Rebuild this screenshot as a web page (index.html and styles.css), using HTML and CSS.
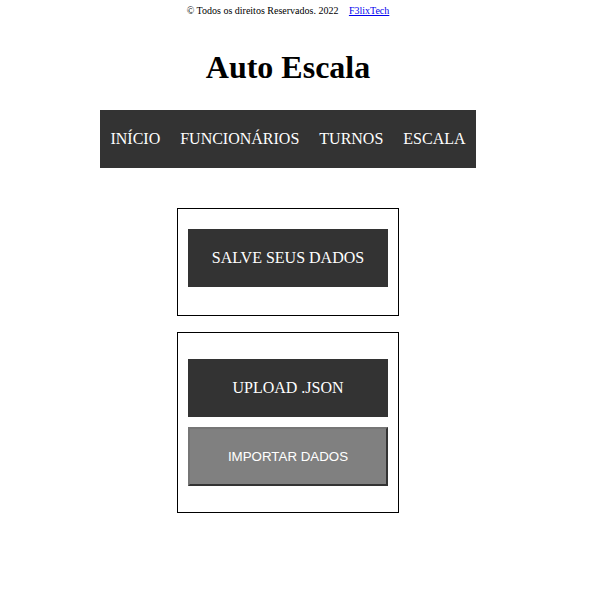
FILE: index.html
```html
<!DOCTYPE html>
<html lang="pt-BR">
<head>
<meta charset="utf-8">
<title>Auto Escala</title>
<link rel="stylesheet" href="styles.css">
</head>
<body>
<footer class="credits">© Todos os direitos Reservados. 2022 <a class="credits-link" href="#">F3lixTech</a></footer>
<h1 class="title">Auto Escala</h1>
<nav class="menu">
  <a class="menu-item" href="#">INÍCIO</a>
  <a class="menu-item" href="#">FUNCIONÁRIOS</a>
  <a class="menu-item" href="#">TURNOS</a>
  <a class="menu-item" href="#">ESCALA</a>
</nav>
<main class="panels">
  <section class="panel panel-save">
    <div class="dark-btn">SALVE SEUS DADOS</div>
  </section>
  <section class="panel panel-upload">
    <div class="dark-btn">UPLOAD .JSON</div>
    <button class="import-btn" type="button">IMPORTAR DADOS</button>
  </section>
</main>
</body>
</html>
```
FILE: styles.css
```css
html, body {
  margin: 0;
  padding: 0;
  background: #fff;
}
body {
  font-family: "Liberation Serif", "Times New Roman", serif;
  color: #000;
  width: 576px;
}
.credits {
  display: block;
  text-align: center;
  font-size: 10px;
  line-height: 12px;
  padding-top: 5px;
}
.credits-link {
  color: #0000ee;
  margin-left: 8px;
}
.title {
  text-align: center;
  font-size: 32px;
  font-weight: bold;
  margin: 32px 0 0;
  line-height: 37px;
}
.menu {
  display: flex;
  width: 376px;
  height: 58px;
  margin: 24px 0 0 100px;
  background: #333;
  align-items: center;
  justify-content: center;
}
.menu-item {
  color: #fff;
  text-decoration: none;
  font-size: 16px;
  padding: 0 10px;
}
.panels {
  display: flex;
  flex-direction: column;
  align-items: flex-start;
  gap: 16px;
  margin: 40px 0 0 177px;
}
.panel {
  border: 1px solid #000;
  display: flex;
  flex-direction: column;
  padding: 0 10px;
  width: 200px;
}
.panel-save {
  padding-top: 20px;
  padding-bottom: 28px;
}
.panel-upload {
  padding-top: 26px;
  padding-bottom: 26px;
  gap: 10px;
}
.dark-btn {
  width: 200px;
  height: 58px;
  background: #333;
  color: #fff;
  font-size: 16px;
  display: flex;
  align-items: center;
  justify-content: center;
}
.import-btn {
  width: 200px;
  height: 59px;
  background: #808080;
  color: #fff;
  font-family: "Liberation Sans", Arial, sans-serif;
  font-size: 13.33px;
  border-style: solid;
  border-width: 2px;
  border-color: #767676 #333 #333 #767676;
  padding: 0;
  margin: 0;
}
```
